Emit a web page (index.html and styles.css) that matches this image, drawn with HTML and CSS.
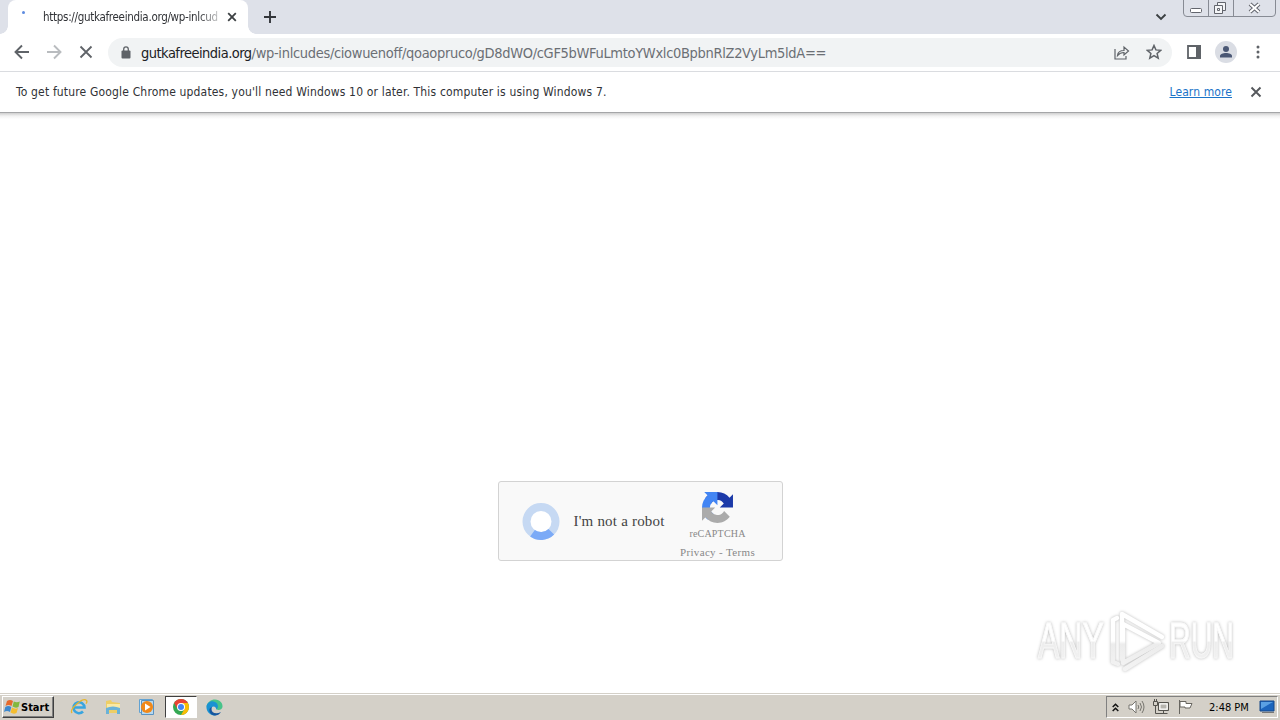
FILE: index.html
```html
<!DOCTYPE html>
<html lang="en">
<head>
<meta charset="utf-8">
<title>Browser</title>
<link rel="stylesheet" href="styles.css">
</head>
<body>
<div class="screen">
  <header class="tabstrip">
    <div class="tab">
      <span class="spinner"></span>
      <span class="tab-title">https://gutkafreeindia.org/wp-inlcud</span>
      <svg class="tab-close" width="10" height="10" viewBox="0 0 10 10"><path d="M1.2 1.2l7.6 7.6M8.8 1.2L1.2 8.8" stroke="#3c4043" stroke-width="1.8"/></svg>
    </div>
    <svg class="plus" width="14" height="14" viewBox="0 0 14 14"><path d="M7 1v12M1 7h12" stroke="#33363b" stroke-width="1.9"/></svg>
    <svg class="chevron" width="12" height="8" viewBox="0 0 12 8"><path d="M1.5 1.5L6 6l4.5-4.5" fill="none" stroke="#3c4043" stroke-width="1.9"/></svg>
    <svg class="winbtns" width="94" height="18" viewBox="0 0 94 18" fill="none">
      <path d="M.5 0v13q0 3.500 3.500 3.500h85q3.500 0 3.500-3.500V0M25.500 0v16M50.500 0v16" stroke="#878b94"/>
      <rect x="7.500" y="8.500" width="11" height="4" rx="1" fill="#fff" stroke="#62656d"/>
      <path d="M34.500 2.500h8v8h-8z" fill="#f4f5f7" stroke="#62656d"/><path d="M31.500 5.500h8v8h-8z" fill="#f4f5f7" stroke="#62656d"/><path d="M34.500 8.500h2v2h-2z" stroke="#62656d"/>
      <path d="M67 4l9 8M76 4l-9 8" stroke="#62656d" stroke-width="4"/><path d="M67 4l9 8M76 4l-9 8" stroke="#fff" stroke-width="2"/>
    </svg>
  </header>
  <nav class="toolbar">
    <svg class="back" width="16" height="16" viewBox="0 0 16 16" fill="none" stroke="#5f6368" stroke-width="1.900"><path d="M15 8H2M8 1.500L1.500 8 8 14.500"/></svg>
    <svg class="forward" width="16" height="16" viewBox="0 0 16 16" fill="none" stroke="#b9bcbf" stroke-width="1.900"><path d="M1 8h13M8 1.500L14.500 8 8 14.500"/></svg>
    <svg class="stop" width="14" height="14" viewBox="0 0 14 14"><path d="M1.500 1.500l11 11M12.500 1.500l-11 11" stroke="#5f6368" stroke-width="1.800"/></svg>
    <div class="omnibox">
      <svg class="lock" width="10" height="13" viewBox="0 0 10 13"><rect x=".5" y="4.500" width="9" height="8" rx="1" fill="#5f6368"/><path d="M2.700 5V3.200a2.300 2.300 0 014.600 0V5" fill="none" stroke="#5f6368" stroke-width="1.300"/></svg>
      <span class="host">gutkafreeindia.org</span><span class="path">/wp-inlcudes/ciowuenoff/qoaopruco/gD8dWO/cGF5bWFuLmtoYWxlc0BpbnRlZ2VyLm5ldA==</span>
      <svg class="share" width="16" height="15" viewBox="0 0 16 15" fill="none" stroke="#5f6368" stroke-width="1.200"><path d="M1 4v10h11v-3M3.500 10.500Q4 5.500 10 5.500v-3.500l4.500 4-4.500 4V7.500Q6 7.500 3.500 10.500z"/></svg>
      <svg class="star" width="16" height="16" viewBox="0 0 16 16"><path d="M8 1.500l1.900 4.400 4.800.4-3.600 3.200 1.100 4.700L8 11.700l-4.200 2.500 1.100-4.700L1.300 6.300l4.800-.4z" fill="none" stroke="#5f6368" stroke-width="1.500"/></svg>
    </div>
    <svg class="panel" width="14" height="14" viewBox="0 0 14 14"><path d="M1 1h12v12H1z" fill="#fff" stroke="#5f6368" stroke-width="1.800"/><path d="M9 0h5v14H9z" fill="#5f6368"/></svg>
    <svg class="avatar" width="22" height="22" viewBox="0 0 22 22"><circle cx="11" cy="11" r="11" fill="#dadde4"/><circle cx="11" cy="8" r="3" fill="#4b5875"/><path d="M5 16.500v-1.500c0-2 3-3 6-3s6 1 6 3v1.500z" fill="#4b5875"/></svg>
    <svg class="dots" width="4" height="14" viewBox="0 0 4 14" fill="#5f6368"><circle cx="2" cy="2" r="1.500"/><circle cx="2" cy="7" r="1.500"/><circle cx="2" cy="12" r="1.500"/></svg>
  </nav>
  <section class="infobar">
    <span class="notice">To get future Google Chrome updates, you'll need Windows 10 or later. This computer is using Windows 7.</span>
    <a class="learn">Learn more</a>
    <svg class="dismiss" width="12" height="12" viewBox="0 0 12 12"><path d="M1.500 1.500l9 9M10.500 1.500l-9 9" stroke="#55585c" stroke-width="1.900"/></svg>
  </section>
  <main class="page">
    <div class="captcha">
      <svg class="ring" width="38" height="38" viewBox="0 0 38 38"><circle cx="19" cy="19.500" r="14.500" fill="#fff" stroke="#c6d9f3" stroke-width="8"/><path d="M29.300 29.700A14.500 14.500 0 0110.500 31.200" fill="none" stroke="#7baaf7" stroke-width="8"/></svg>
      <span class="robot">I'm not a robot</span>
      <div class="brand">
        <svg width="31" height="31" viewBox="0 0 64 64"><path d="M64 31.955l-.033-1.370V4.687l-7.160 7.160C50.948 4.674 42.033.093 32.050.093c-10.400 0-19.622 4.960-25.458 12.640l11.736 11.860a15.550 15.550 0 0 1 4.754-5.334c2.050-1.600 4.952-2.906 8.968-2.906.485 0 .860.057 1.135.163 4.976.393 9.288 3.140 11.828 7.124l-8.307 8.307L64 31.953" fill="#1c3aa9"/><path d="M31.862.094L4.594.125l7.160 7.160C4.580 13.147 0 22.060 0 32.046c0 10.400 4.960 19.622 12.640 25.458L24.500 45.768a15.550 15.550 0 0 1-5.334-4.754c-1.600-2.050-2.906-4.952-2.906-8.968 0-.485.057-.860.163-1.135.393-4.976 3.140-9.288 7.124-11.828l8.307 8.307z" fill="#4285f4"/><path d="M.001 32.045V59.314l7.160-7.160c5.860 7.173 14.774 11.754 24.760 11.754 10.400 0 19.622-4.960 25.458-12.640l-11.736-11.860a15.550 15.550 0 0 1-4.754 5.334c-2.050 1.600-4.952 2.906-8.968 2.906-.485 0-.860-.057-1.135-.163-4.976-.393-9.288-3.140-11.828-7.124l8.307-8.307z" fill="#ababab"/></svg>
        <span class="name">reCAPTCHA</span>
        <span class="terms">Privacy - Terms</span>
      </div>
    </div>
    <div class="watermark">
      <span class="wm wm-any">ANY</span>
      <svg width="60" height="64" viewBox="0 0 60 64" fill="none" stroke-width="4.500" stroke-linejoin="round" stroke-linecap="round">
        <defs><linearGradient id="fade" gradientUnits="userSpaceOnUse" x1="0" y1="0" x2="0" y2="64"><stop offset=".5" stop-color="#fff"/><stop offset=".55" stop-color="#ececec"/><stop offset="1" stop-color="#f4f4f4"/></linearGradient></defs>
        <g stroke="url(#fade)"><path d="M8 9L4 11v42l5 2"/><path d="M13 50V5l40 23"/><path d="M14 15l36 19-36 20z"/><path d="M53 37L16 60"/></g>
      </svg>
      <span class="wm wm-run">RUN</span>
    </div>
  </main>
  <footer class="taskbar">
    <div class="start">
      <svg width="17" height="16" viewBox="0 0 17 16"><path d="M3 2q3-2 6 0L7.500 7Q4.500 5 1.500 7z" fill="#e66a2c"/><path d="M9.800 2.500q3 1.500 6 0L14.500 8q-3 1.500-6-.5z" fill="#82b83e"/><path d="M1.300 8q3-2 6 0L6 13q-3-2-6 0z" fill="#3d88ce"/><path d="M8 8.500q3 2 6 .5l-1.500 5q-3 1.500-6-.5z" fill="#f4bd30"/></svg>
      <span class="start-label">Start</span>
    </div>
    <div class="launch">
      <svg class="ie" width="18" height="18" viewBox="0 0 18 18" fill="none"><path d="M4.500 9.500h10A5.500 5.500 0 1013 13.500" stroke="#39a5df" stroke-width="2.600"/><path d="M2 15C-1 11 13-1 16.500 2.500c.8 1 .2 2.300-.5 3.200" stroke="#e5b52f" stroke-width="1.300"/></svg>
      <svg class="folder" width="18" height="18" viewBox="0 0 18 18"><path d="M2 3l5-1 1 2 8 1v10H2z" fill="#edce66"/><path d="M3 6h13v4H3z" fill="#f9e9a5"/><path d="M2 16v-6q7-3 14 0v6h-3v-4H5v4z" fill="#69b2d8"/></svg>
      <svg class="media" width="18" height="18" viewBox="0 0 18 18"><path d="M1.500 1.500h13v13h-13z" fill="#d8ecf9" stroke="#62a2d2"/><path d="M3.500 2.500h12v14h-12z" fill="#b6d8ef" stroke="#5993c2"/><circle cx="9" cy="9" r="6" fill="#f18818"/><path d="M7 5.500l5.500 3.500L7 12.500z" fill="#fff"/></svg>
      <div class="active"><svg width="16" height="16" viewBox="0 0 16 16"><circle cx="8" cy="8" r="8" fill="#34a853"/><path d="M1.100 4A8 8 0 0114.900 4H8L4.500 10z" fill="#ea4335"/><path d="M14.900 4A8 8 0 018 16l3.500-6L8 4z" fill="#fbbc04"/><circle cx="8" cy="8" r="4" fill="#fff"/><circle cx="8" cy="8" r="3" fill="#4285f4"/></svg></div>
      <svg class="edge" width="17" height="17" viewBox="0 0 17 17"><path d="M.5 8C1 3 5 .5 9 .5c5 0 8 4 7.500 7.500-.5 3-4 3.500-6 2.500C10 8 9 6 6 6 3 6 1 7 .5 8z" fill="#48c38a"/><path d="M.5 9C0 4 5 1 9 3c3 1.500 4 5 1.500 7.500C10 8 8 6.500 6 8c-3 3 0 7 4 8.300C5 17.500.8 13 .5 9z" fill="#1a92d2"/><path d="M6 8c-2 5 3 8 9 5-3 5-10 4.500-11.500-.5C3 10 4 8.500 6 8z" fill="#15569f"/></svg>
    </div>
    <div class="tray">
      <svg class="up" width="7" height="9" viewBox="0 0 7 9"><path d="M.7 4l2.800-2.800L6.300 4M.7 8l2.800-2.800L6.300 8" fill="none" stroke="#111" stroke-width="1.500"/></svg>
      <svg class="sound" width="17" height="16" viewBox="0 0 17 16" fill="none" stroke="#77756f"><path d="M1 6h3l4-4v12l-4-4H1z" fill="#fff"/><path d="M10 6q1.500 2 0 4M12 4q3 4 0 8M14 2q4 6 0 12"/></svg>
      <svg class="net" width="16" height="16" viewBox="0 0 16 16" fill="none" stroke="#55534e"><path d="M5.500 3.500h10v8h-10z" fill="#deddd8"/><path d="M7 5h7v5H7z" fill="#b6b4ae" stroke="#fff"/><path d="M.5 2.500h4v4h-4zM1.500 0v3M3.500 0v3M2.500 7v7.500h12M10.500 12v2" fill="none"/></svg>
      <svg class="flag" width="17" height="16" viewBox="0 0 17 16"><path d="M2.500 1v14M3 2.500h6v2h6L13 9H8V8H3z" fill="#fff" stroke="#686660"/></svg>
      <span class="clock">2:48 PM</span>
      <svg class="desk" width="16" height="14" viewBox="0 0 16 14"><path d="M1 1h14v10H1z" fill="#1c65bd" stroke="#174989"/><path d="M2 2h12L2 9z" fill="#5aa0e3"/><path d="M3 12h12v1H3z" fill="#777"/></svg>
    </div>
  </footer>
</div>
</body>
</html>
```

FILE: styles.css
```css
* { box-sizing: border-box; }
body { margin: 0; font-family: "DejaVu Sans Condensed", "DejaVu Sans", sans-serif; }
svg { display: block; flex: none; }
span, a { white-space: nowrap; }
.screen { width: 1280px; height: 720px; display: flex; flex-direction: column; overflow: hidden; background: #fff; }

/* the two gradients are the flared feet of the active tab */
.tabstrip {
  height: 34px; flex: none; display: flex; padding-left: 8px;
  background:
    radial-gradient(circle at 0 0, transparent 7.5px, #fff 8px) 0 26px / 8px 8px no-repeat,
    radial-gradient(circle at 100% 0, transparent 7.5px, #fff 8px) 248px 26px / 8px 8px no-repeat,
    #dee1e9;
}
.tab { width: 240px; height: 34px; background: #fff; border-radius: 8px 8px 0 0; display: flex; align-items: center; }
.spinner { width: 3px; height: 3px; border-radius: 50%; background: #5d8be0; margin: -10px 0 0 14px; }
.tab-title { width: 176px; margin-left: 18px; font-size: 11.5px; letter-spacing: -.3px; color: #303236; -webkit-mask-image: linear-gradient(90deg, #000 88%, rgba(0,0,0,.25)); mask-image: linear-gradient(90deg, #000 88%, rgba(0,0,0,.25)); }
.tab-close { margin-left: 8px; }
.plus { margin: 10px 0 0 15px; }
.chevron { margin: 13px 0 0 auto; }
.winbtns { margin: 0 3px 0 16px; }

.toolbar { height: 38px; flex: none; display: flex; align-items: center; padding: 0 0 1px 14px; border-bottom: 1px solid #dadce0; }
.forward { margin-left: 16px; }
.stop { margin-left: 17px; }
.omnibox { width: 1064px; height: 29px; margin-left: 15px; border-radius: 15px; background: #f1f3f4; display: flex; align-items: center; padding-left: 13px; font-size: 14.5px; color: #202124; }
.host, .path { padding-top: 1px; }
.host { margin-left: 10px; letter-spacing: -.52px; }
.path { color: #6b6f74; letter-spacing: -.32px; }
.share { margin-left: auto; }
.star { margin: 0 10px 0 16px; }
.panel { margin-left: 15px; }
.avatar { margin-left: 14px; }
.dots { margin-left: 19px; }

.infobar { height: 41px; flex: none; display: flex; align-items: center; padding: 0 18px 1px 16px; font-size: 12px; color: #303236; border-bottom: 1px solid #a5a6a8; }
.notice { letter-spacing: .165px; }
.learn { margin-left: auto; letter-spacing: .1px; color: #1a73c8; text-decoration: underline; }
.dismiss { margin-left: 18px; }

.page { flex: 1; min-height: 0; background: linear-gradient(#cfcfcf, #f2f2f2 3px, #fff 6px); display: flex; flex-direction: column; align-items: center; padding-top: 368px; }
.captcha { width: 285px; height: 80px; flex: none; display: flex; align-items: center; background: #f9f9f9; border: 1px solid #d3d3d3; border-radius: 3px; padding-left: 23px; font-family: "Liberation Serif", serif; }
.robot { width: 92px; margin-left: 14px; font-size: 15px; letter-spacing: .2px; color: #444; }
.brand { width: 80px; height: 78px; margin-left: 12px; padding-top: 10px; display: flex; flex-direction: column; align-items: center; color: #888; }
.name { font-size: 10px; line-height: 12px; margin-top: 5px; letter-spacing: .2px; }
.terms { font-size: 11px; line-height: 12px; margin-top: 6px; letter-spacing: .35px; }
.watermark { width: 196px; height: 64px; flex: none; align-self: flex-end; margin: 48px 46px 0 0; display: flex; align-items: center; filter: drop-shadow(0 0 1.5px #bbb); }
.wm { flex: none; font: 50px "Liberation Sans", sans-serif; color: transparent; background: linear-gradient(#fff 50%, #ededed 52%, #f3f3f3); -webkit-background-clip: text; background-clip: text; -webkit-text-stroke: 1px rgba(248,248,248,.9); transform-origin: left; }
.wm-any { width: 103px; margin-right: -37px; transform: scaleX(.64); }
.wm-run { width: 109px; margin-right: -43px; transform: scaleX(.6); }
.watermark svg { margin-left: 5px; }

.taskbar { height: 27px; flex: none; display: flex; align-items: center; background: #d4d0c8; border-top: 1px solid #d4d0c8; box-shadow: inset 0 1px #fff; padding: 0 2px 0 2px; }
.start { width: 52px; height: 22px; display: flex; align-items: center; padding-left: 1px; border: 1px solid; border-color: #fff #404040 #404040 #fff; box-shadow: inset -1px -1px #808080; }
.start-label { font: bold 11px "DejaVu Sans Condensed", sans-serif; }
.launch { display: flex; align-items: center; margin-left: 16px; }
.folder, .media { margin-left: 16px; }
.active { width: 32px; height: 22px; margin-left: 9px; display: flex; align-items: center; justify-content: center; background: #fff; border: 1px solid; border-color: #404040 #fff #fff #404040; }
.edge { margin-left: 9px; }
.tray { width: 172px; height: 22px; margin-left: auto; display: flex; align-items: center; padding-left: 5px; border: 1px solid; border-color: #808080 #fff #fff #808080; }
.sound { margin-left: 9px; }
.net, .flag { margin-left: 8px; }
.clock { width: 40px; margin-left: 15px; font-size: 11px; }
.desk { margin-left: 10px; }
```
